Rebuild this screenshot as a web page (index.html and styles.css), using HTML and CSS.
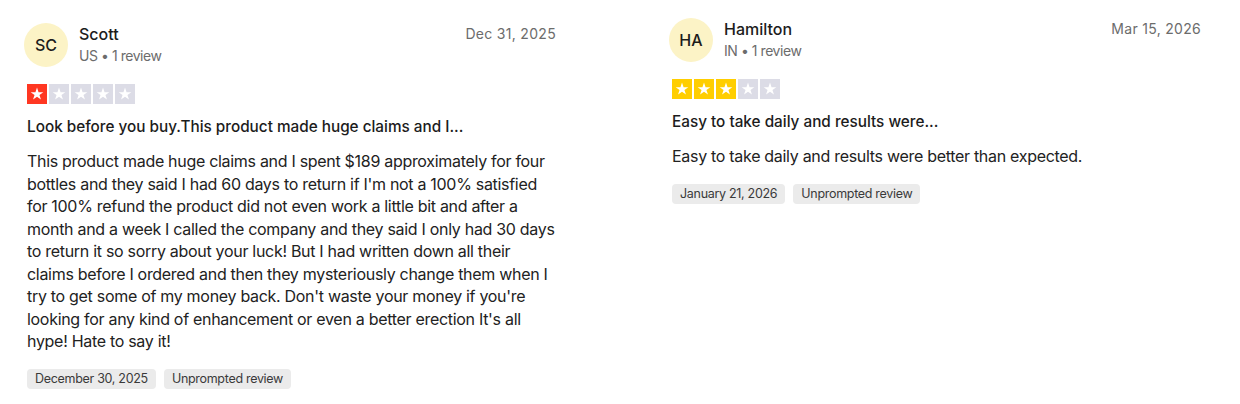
FILE: index.html
```html
<!DOCTYPE html>
<html lang="en">
<head>
<meta charset="utf-8">
<title>Reviews</title>
<link rel="stylesheet" href="styles.css">
</head>
<body>
<main class="reviews">
  <article class="card card--low">
    <header class="card-head">
      <div class="avatar">SC</div>
      <div class="who">
        <div class="name">Scott</div>
        <div class="meta">US • 1 review</div>
      </div>
      <time class="date">Dec 31, 2025</time>
    </header>
    <div class="stars">
      <span class="star on red"><svg viewBox="0 0 20 20"><path d="M10 3.6l1.55 4.55h4.8l-3.9 2.8 1.5 4.6L10 12.7l-3.95 2.85 1.5-4.6-3.9-2.8h4.8z"/></svg></span>
      <span class="star"><svg viewBox="0 0 20 20"><path d="M10 3.6l1.55 4.55h4.8l-3.9 2.8 1.5 4.6L10 12.7l-3.95 2.85 1.5-4.6-3.9-2.8h4.8z"/></svg></span>
      <span class="star"><svg viewBox="0 0 20 20"><path d="M10 3.6l1.55 4.55h4.8l-3.9 2.8 1.5 4.6L10 12.7l-3.95 2.85 1.5-4.6-3.9-2.8h4.8z"/></svg></span>
      <span class="star"><svg viewBox="0 0 20 20"><path d="M10 3.6l1.55 4.55h4.8l-3.9 2.8 1.5 4.6L10 12.7l-3.95 2.85 1.5-4.6-3.9-2.8h4.8z"/></svg></span>
      <span class="star"><svg viewBox="0 0 20 20"><path d="M10 3.6l1.55 4.55h4.8l-3.9 2.8 1.5 4.6L10 12.7l-3.95 2.85 1.5-4.6-3.9-2.8h4.8z"/></svg></span>
    </div>
    <h2 class="title">Look before you buy.This product made huge claims and I...</h2>
    <p class="text">This product made huge claims and I spent $189 approximately for four bottles and they said I had 60 days to return if I'm not a 100% satisfied for 100% refund the product did not even work a little bit and after a month and a week I called the company and they said I only had 30 days to return it so sorry about your luck! But I had written down all their claims before I ordered and then they mysteriously change them when I try to get some of my money back. Don't waste your money if you're looking for any kind of enhancement or even a better erection It's all hype! Hate to say it!</p>
    <div class="tags">
      <span class="tag">December 30, 2025</span>
      <span class="tag">Unprompted review</span>
    </div>
  </article>

  <article class="card">
    <header class="card-head">
      <div class="avatar">HA</div>
      <div class="who">
        <div class="name">Hamilton</div>
        <div class="meta">IN • 1 review</div>
      </div>
      <time class="date">Mar 15, 2026</time>
    </header>
    <div class="stars">
      <span class="star on yellow"><svg viewBox="0 0 20 20"><path d="M10 3.6l1.55 4.55h4.8l-3.9 2.8 1.5 4.6L10 12.7l-3.95 2.85 1.5-4.6-3.9-2.8h4.8z"/></svg></span>
      <span class="star on yellow"><svg viewBox="0 0 20 20"><path d="M10 3.6l1.55 4.55h4.8l-3.9 2.8 1.5 4.6L10 12.7l-3.95 2.85 1.5-4.6-3.9-2.8h4.8z"/></svg></span>
      <span class="star on yellow"><svg viewBox="0 0 20 20"><path d="M10 3.6l1.55 4.55h4.8l-3.9 2.8 1.5 4.6L10 12.7l-3.95 2.85 1.5-4.6-3.9-2.8h4.8z"/></svg></span>
      <span class="star"><svg viewBox="0 0 20 20"><path d="M10 3.6l1.55 4.55h4.8l-3.9 2.8 1.5 4.6L10 12.7l-3.95 2.85 1.5-4.6-3.9-2.8h4.8z"/></svg></span>
      <span class="star"><svg viewBox="0 0 20 20"><path d="M10 3.6l1.55 4.55h4.8l-3.9 2.8 1.5 4.6L10 12.7l-3.95 2.85 1.5-4.6-3.9-2.8h4.8z"/></svg></span>
    </div>
    <h2 class="title">Easy to take daily and results were...</h2>
    <p class="text">Easy to take daily and results were better than expected.</p>
    <div class="tags">
      <span class="tag">January 21, 2026</span>
      <span class="tag">Unprompted review</span>
    </div>
  </article>
</main>
</body>
</html>
```

FILE: styles.css
```css
* { box-sizing: border-box; }

html, body {
  margin: 0;
  padding: 0;
  background: #ffffff;
}

body {
  font-family: Inter, "Noto Sans", "DejaVu Sans", sans-serif;
  color: #1c1c1c;
}

.reviews {
  display: grid;
  grid-template-columns: 529px 529px;
  column-gap: 116px;
  align-items: start;
  padding: 18px 0 0 27px;
}

.card {
  display: flex;
  flex-direction: column;
}

.card--low {
  padding-top: 5px;
}

.card-head {
  display: flex;
  align-items: flex-start;
}

.avatar {
  width: 44px;
  height: 44px;
  margin-left: -3px;
  border-radius: 50%;
  background: #fcf3c6;
  display: flex;
  align-items: center;
  justify-content: center;
  font-size: 16px;
  font-weight: 500;
  color: #1c1c1c;
  flex-shrink: 0;
}

.who {
  margin-left: 11px;
  padding-top: 1px;
  flex: 1;
}

.name {
  font-size: 16px;
  font-weight: 500;
  line-height: 20px;
  color: #1c1c1c;
}

.meta {
  margin-top: 3px;
  font-size: 14px;
  line-height: 18px;
  letter-spacing: -0.45px;
  color: #6c6c6c;
}

.date {
  font-size: 14px;
  line-height: 18px;
  color: #6c6c6c;
  padding-top: 2px;
  letter-spacing: 0.3px;
}

.stars {
  display: flex;
  gap: 2px;
  margin-top: 17px;
}

.star {
  width: 20px;
  height: 20px;
  background: #dcdce6;
  display: flex;
}

.star svg {
  width: 20px;
  height: 20px;
  fill: #ffffff;
}

.star.red { background: #ff3722; }
.star.yellow { background: #ffce00; }

.title {
  margin: 13px 0 0;
  font-size: 15.3px;
  font-weight: 500;
  line-height: 20px;
  color: #1c1c1c;
}

.text {
  margin: 13px 0 0;
  font-size: 16px;
  line-height: 22.5px;
  letter-spacing: -0.3px;
  color: #222222;
}

.tags {
  display: flex;
  gap: 8px;
  margin-top: 16px;
}

.tag {
  background: #ebebeb;
  border-radius: 4px;
  padding: 0 8px;
  font-size: 12.5px;
  line-height: 20px;
  letter-spacing: -0.3px;
  color: #3a3a3a;
}
```
